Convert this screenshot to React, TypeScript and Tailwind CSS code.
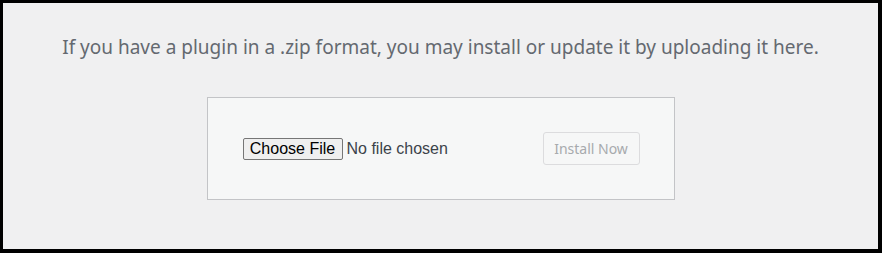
export default function App() {
  return (
    <div className="w-[882px] h-[253px] bg-[#f0f0f1] border-black border-t-[3px] border-l-[3px] border-r-4 border-b-4 box-border flex flex-col items-center">
      <p
        className="mt-[32px] text-[19px] leading-6 text-[#646970]"
        style={{ fontFamily: '"Noto Sans", "Open Sans", sans-serif' }}
      >
        If you have a plugin in a .zip format, you may install or update it by uploading it here.
      </p>

      <div className="mt-[38px] w-[468px] h-[103px] bg-[#f6f7f7] border border-[#c3c4c7] flex items-center justify-between pl-[35px] pr-[34px]">
        <div
          className="flex items-center gap-[4px] text-[16px] text-black"
          style={{ fontFamily: '"Liberation Sans", Arial, sans-serif' }}
        >
          <button className="w-[100px] h-[22px] bg-[#efefef] border border-[#767676] rounded-[2px] leading-none">
            Choose File
          </button>
          <span className="text-[#3c434a]">No file chosen</span>
        </div>
        <button
          className="w-[97px] h-[33px] bg-[#f6f7f7] border border-[#dcdcde] rounded-[3px] text-[14px] text-[#a7aaad]"
          style={{ fontFamily: '"Noto Sans", "Open Sans", sans-serif' }}
        >
          Install Now
        </button>
      </div>
    </div>
  );
}
